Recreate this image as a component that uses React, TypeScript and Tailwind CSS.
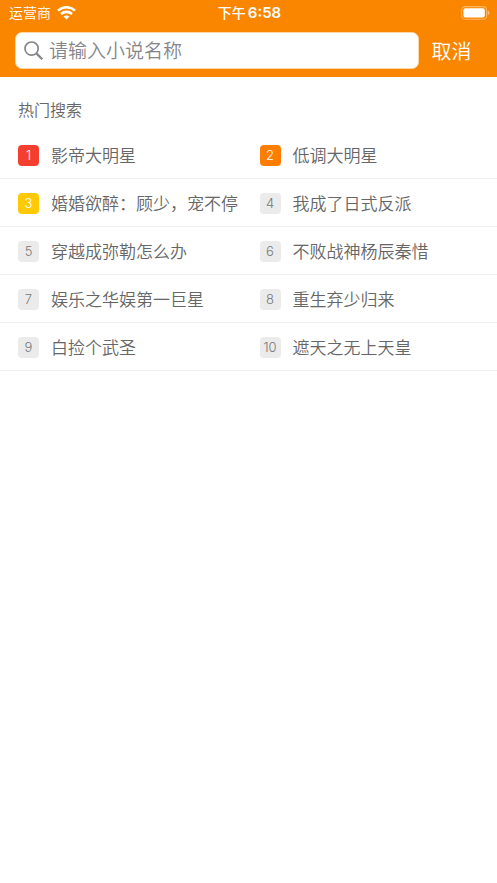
const books = [
  '影帝大明星',
  '低调大明星',
  '婚婚欲醉：顾少，宠不停',
  '我成了日式反派',
  '穿越成弥勒怎么办',
  '不败战神杨辰秦惜',
  '娱乐之华娱第一巨星',
  '重生弃少归来',
  '白捡个武圣',
  '遮天之无上天皇',
];

const badgeColors = [
  'bg-[#f43f30] text-white',
  'bg-[#ff7d00] text-white',
  'bg-[#ffc905] text-white',
];

function WifiIcon() {
  return (
    <svg width="19" height="14" viewBox="0 0 19 14" fill="none" stroke="white" aria-hidden="true">
      <path d="M1 4.6C5.8 0.1 13.2 0.1 18 4.6" strokeWidth="2.6" />
      <path d="M4 8C7.2 5.2 11.8 5.2 15 8" strokeWidth="2.6" />
      <path d="M9.5 13.5L6.5 10.5C8.2 9 10.8 9 12.5 10.5Z" fill="white" stroke="none" />
    </svg>
  );
}

function BatteryIcon() {
  return (
    <svg width="29" height="14" viewBox="0 0 29 14" aria-hidden="true">
      <rect x="0.6" y="0.6" width="25" height="12.6" rx="3.4" fill="none" stroke="white" strokeOpacity="0.4" strokeWidth="1.1" />
      <rect x="2.4" y="2.2" width="21.4" height="9.4" rx="2" fill="white" />
      <path d="M26.8 4.7C28.9 5.4 28.9 8.4 26.8 9.1Z" fill="white" fillOpacity="0.5" />
    </svg>
  );
}

function SearchIcon() {
  return (
    <svg width="20" height="20" viewBox="0 0 20 20" fill="none" stroke="#85858a" aria-hidden="true" className="shrink-0">
      <circle cx="7.6" cy="7.6" r="6.6" strokeWidth="1.7" />
      <path d="M12.4 12.4L18.3 18.3" strokeWidth="2.2" />
    </svg>
  );
}

function StatusBar() {
  return (
    <div className="grid h-[26px] grid-cols-3 items-center pr-[7px] pl-[9px] text-sm">
      <div className="flex items-center gap-[6px]">
        <span>运营商</span>
        <WifiIcon />
      </div>
      <div className="flex items-center justify-center gap-[2px] font-medium">
        <span>下午</span>
        <span className="text-[15px] font-semibold">6:58</span>
      </div>
      <div className="flex justify-end">
        <BatteryIcon />
      </div>
    </div>
  );
}

function BookItem({ rank, title }: { rank: number; title: string }) {
  const color = badgeColors[rank - 1] ?? 'bg-[#ebebeb] text-[#777777]';
  return (
    <li className="h-12 border-b border-[#f0f0f0] pl-[18px] even:pl-[11px]">
      <a href="#" className="flex h-full items-center gap-3 pt-[2px] whitespace-nowrap">
        <span className={`flex size-[21px] items-center justify-center rounded-[4px] text-[13px] leading-none font-light ${color}`}>
          {rank}
        </span>
        <span className="text-[17px] leading-[24px]">{title}</span>
      </a>
    </li>
  );
}

export default function App() {
  return (
    <div className="min-h-screen bg-white font-[Inter,'Noto_Sans_CJK_SC',sans-serif] font-[350] text-[#666666]">
      <header className="bg-[#fa8600] pb-2 text-white">
        <StatusBar />
        <form className="mt-[6px] flex items-center pl-[15px]" onSubmit={(e) => e.preventDefault()}>
          <label className="flex h-[37px] min-w-0 flex-1 items-center gap-[5px] rounded-[7px] border border-[#fdd7a8] bg-white pl-2">
            <SearchIcon />
            <input
              type="text"
              aria-label="搜索小说"
              placeholder="请输入小说名称"
              className="min-w-0 flex-1 bg-transparent pt-[3px] text-[19px] text-[#666666] outline-none placeholder:text-[#85858a]"
            />
          </label>
          <button type="button" className="w-[78px] pt-[2px] pr-[25px] pl-3 text-xl whitespace-nowrap">
            取消
          </button>
        </form>
      </header>
      <main>
        <h2 className="px-[18px] pt-5 pb-[7px] text-base leading-[27px] font-[350]">热门搜索</h2>
        <ol className="grid grid-cols-2">
          {books.map((title, i) => (
            <BookItem key={title} rank={i + 1} title={title} />
          ))}
        </ol>
      </main>
    </div>
  );
}
